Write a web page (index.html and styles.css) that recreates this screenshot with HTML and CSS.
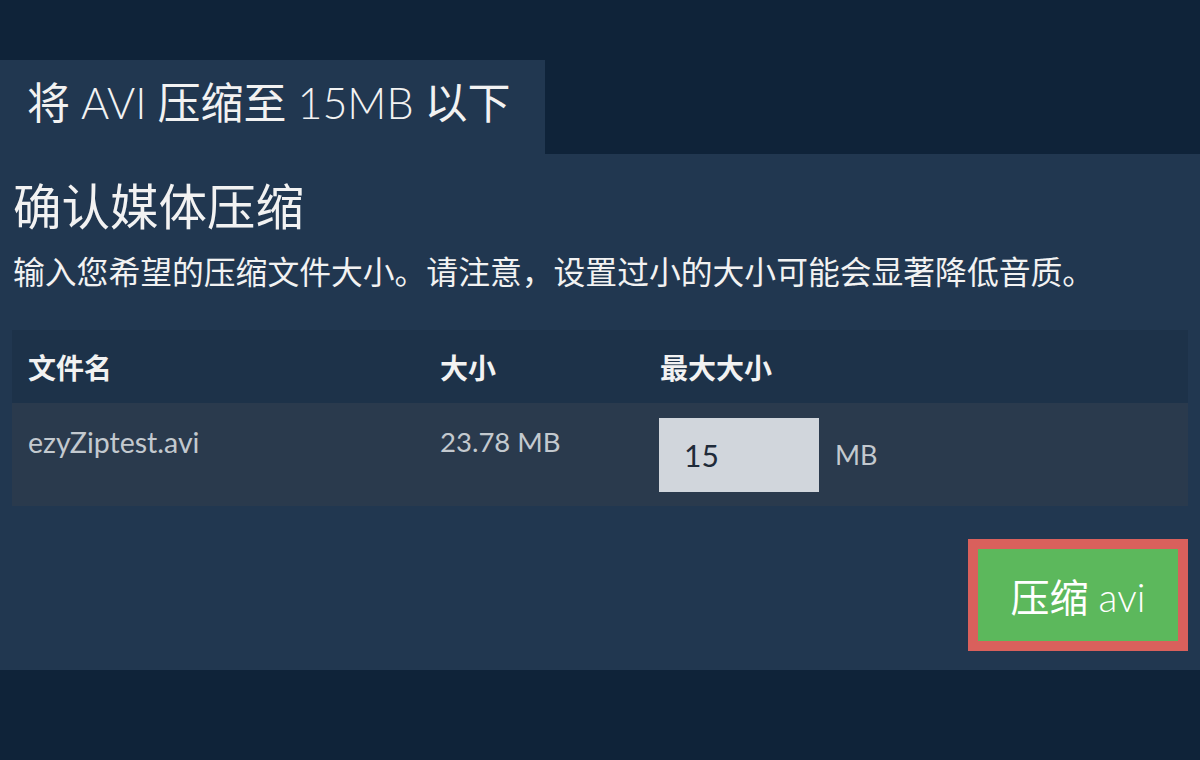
FILE: index.html
```html
<!DOCTYPE html>
<html lang="zh">
<head>
<meta charset="utf-8">
<link rel="stylesheet" href="styles.css">
</head>
<body>
<div class="top"></div>
<div class="tabrow"><div class="tab">将 <span class="lt">AVI</span> 压缩至 <span class="lt">15MB</span> 以下</div></div>
<div class="panel">
  <h1 class="heading">确认媒体压缩</h1>
  <p class="desc">输入您希望的压缩文件大小。请注意，设置过小的大小可能会显著降低音质。</p>
  <div class="table">
    <div class="row head">
      <div class="c1">文件名</div>
      <div class="c2">大小</div>
      <div class="c3">最大大小</div>
    </div>
    <div class="row data">
      <div class="c1">ezyZiptest.avi</div>
      <div class="c2">23.78 MB</div>
      <div class="c3 sizecell"><div class="input">15</div><span class="unit">MB</span></div>
    </div>
  </div>
  <div class="actions">
    <button class="btn">压缩 <span class="lt">avi</span></button>
  </div>
</div>
</body>
</html>
```

FILE: styles.css
```css
html, body {
  margin: 0;
  padding: 0;
  background: #0f2339;
  font-family: Lato, "Noto Sans CJK SC", sans-serif;
  color: #f2f2f2;
}
.lt { font-weight: 300; }
.top { height: 60px; }
.tabrow { display: flex; }
.tab {
  width: 518px;
  height: 94px;
  padding-left: 27px;
  background: #213750;
  font-size: 43px;
  line-height: 86px;
  font-weight: 400;
  white-space: nowrap;
}
.panel {
  background: #213750;
  height: 516px;
  padding: 0 12px;
  box-sizing: border-box;
  display: flex;
  flex-direction: column;
}
.heading {
  margin: 19px 0 0 1px;
  font-size: 48.5px;
  line-height: 66px;
  font-weight: 400;
}
.desc {
  margin: 11px 0 0 1px;
  font-size: 31.8px;
  line-height: 44px;
}
.table {
  margin-top: 36px;
  display: flex;
  flex-direction: column;
}
.row { display: flex; }
.row > div { box-sizing: border-box; padding-left: 16px; }
.c1 { width: 412px; }
.c2 { width: 220px; }
.c3 { flex: 1; }
.head {
  background: #1d3249;
  height: 73px;
  align-items: center;
  font-size: 28px;
  font-weight: 700;
}
.data {
  background: #2a3a4d;
  height: 103px;
  color: #c3c9cf;
  font-size: 27.5px;
}
.data .c1, .data .c2 { padding-top: 21px; line-height: 36px; }
.data .c1 { font-size: 28.5px; }
.sizecell {
  display: flex;
  align-items: center;
  gap: 16px;
  padding-left: 15px !important;
}
.input {
  width: 160px;
  height: 74px;
  box-sizing: border-box;
  background: #d1d6dc;
  color: #1f2b39;
  font-size: 30px;
  padding-left: 25px;
  line-height: 74px;
}
.unit { font-size: 27px; color: #c3c9cf; }
.actions {
  display: flex;
  justify-content: flex-end;
  margin-top: 33px;
}
.btn {
  width: 220px;
  height: 112px;
  border: 10px solid #d9605c;
  background: #5cb85c;
  color: #ffffff;
  font-family: Lato, "Noto Sans CJK SC", sans-serif;
  font-weight: 400;
  font-size: 39px;
  padding: 0;
}
```
